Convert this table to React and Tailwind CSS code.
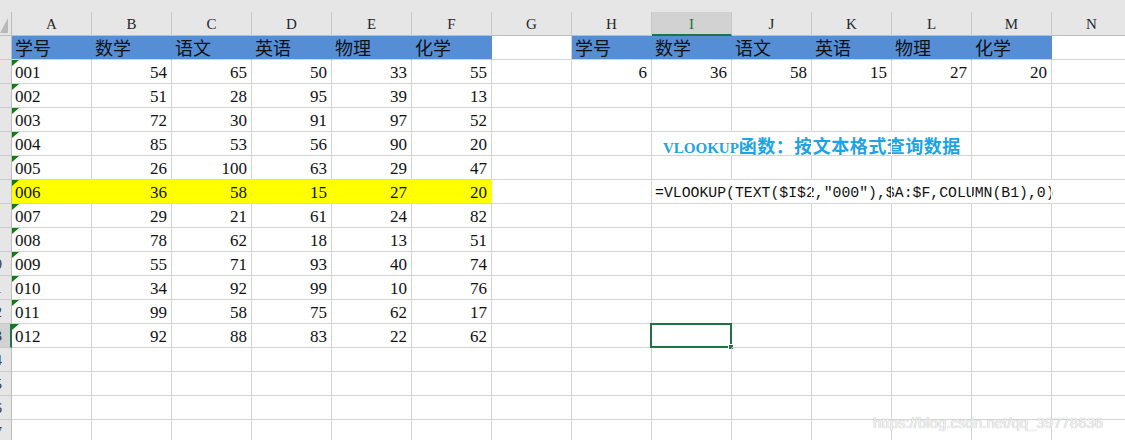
import React from "react";

const COLS = ["A", "B", "C", "D", "E", "F", "G", "H", "I", "J", "K", "L", "M", "N"];
const SUBJECTS = ["学号", "数学", "语文", "英语", "物理", "化学"];
const DATA = [
  ["001", 54, 65, 50, 33, 55],
  ["002", 51, 28, 95, 39, 13],
  ["003", 72, 30, 91, 97, 52],
  ["004", 85, 53, 56, 90, 20],
  ["005", 26, 100, 63, 29, 47],
  ["006", 36, 58, 15, 27, 20],
  ["007", 29, 21, 61, 24, 82],
  ["008", 78, 62, 18, 13, 51],
  ["009", 55, 71, 93, 40, 74],
  ["010", 34, 92, 99, 10, 76],
  ["011", 99, 58, 75, 62, 17],
  ["012", 92, 88, 83, 22, 62],
];
const LOOKUP = [6, 36, 58, 15, 27, 20];

// green "number stored as text" flag
const Flag = () => (
  <svg className="absolute top-0 left-0" width="7" height="6" viewBox="0 0 7 6">
    <polygon points="0,0 7,0 0,6" fill="#127a12" />
  </svg>
);

const Cell = ({ kind, fill, hideRight, children }) => {
  let border = "border-r-[#d4d4d4]";
  if (fill === "blue") border = "border-r-[#558ed5]";
  if (fill === "yellow") border = "border-r-[#ffff00]";
  if (hideRight) border = "border-r-white";
  let bg = "";
  if (fill === "blue") bg = "bg-[#558ed5]";
  if (fill === "yellow") bg = "bg-[#ffff00]";
  let align = "";
  if (kind === "num") align = "text-right pr-[4px] pt-[2px] leading-[22px] text-[17px]";
  if (kind === "text") align = "text-left pl-[3px] pt-[2px] leading-[22px] text-[17px]";
  if (kind === "cjk")
    align = "text-left pl-[3px] leading-[23px] text-[18px] font-[family-name:'Noto_Sans_CJK_SC',sans-serif]";
  return (
    <div
      className={`relative shrink-0 w-[80px] h-[24px] border-r border-b border-b-[#d4d4d4] whitespace-nowrap text-[#111] ${border} ${bg} ${align}`}
    >
      {children}
    </div>
  );
};

const RowHead = ({ n, selected }) => (
  <div
    className={`shrink-0 w-[12px] h-[24px] overflow-hidden border-b border-b-[#c6c6c6] ${
      selected ? "bg-[#d2d2d2] border-r-2 border-r-[#217346]" : "bg-[#e6e6e6] border-r border-r-[#bdbdbd]"
    }`}
  >
    <div className="w-[33px] ml-[-22px] text-center text-[15px] leading-[23px] pt-[1px] text-[#3a3a3a]">{n}</div>
  </div>
);

export default function App() {
  const rows = [];
  for (let r = 1; r <= 17; r++) {
    const cells = [];
    for (let c = 0; c < 14; c++) {
      const key = COLS[c] + r;
      if (r === 1 && (c < 6 || (c >= 7 && c < 13))) {
        cells.push(
          <Cell key={key} kind="cjk" fill="blue">
            {SUBJECTS[c < 6 ? c : c - 7]}
          </Cell>
        );
      } else if (r >= 2 && r <= 13 && c < 6) {
        const v = DATA[r - 2][c];
        cells.push(
          <Cell key={key} kind={c === 0 ? "text" : "num"} fill={r === 7 ? "yellow" : null}>
            {c === 0 && <Flag />}
            {v}
          </Cell>
        );
      } else if (r === 2 && c >= 7 && c < 13) {
        cells.push(
          <Cell key={key} kind="num">
            {LOOKUP[c - 7]}
          </Cell>
        );
      } else if (r === 5 && c === 8) {
        cells.push(
          <Cell key={key} hideRight>
            <div className="pl-[11px] pt-[3px] leading-[20px] font-bold text-[#1ca4e6]">
              <span className="text-[15px]">VLOOKUP</span>
              <span className="text-[18px] tracking-[0.5px] font-[family-name:'Noto_Sans_CJK_SC',sans-serif]">
                函数：按文本格式查询数据
              </span>
            </div>
          </Cell>
        );
      } else if (r === 5 && (c === 9 || c === 10)) {
        cells.push(<Cell key={key} hideRight />);
      } else if (r === 7 && c === 8) {
        cells.push(
          <Cell key={key} hideRight>
            <div className="pl-[3px] pt-[3px] leading-[20px] text-[14.8px] text-[#111] font-[family-name:'Liberation_Mono',monospace]">
              =VLOOKUP(TEXT($I$2,"000"),$A:$F,COLUMN(B1),0)
            </div>
          </Cell>
        );
      } else if (r === 7 && c > 8 && c < 13) {
        cells.push(<Cell key={key} hideRight />);
      } else if (r === 13 && c === 8) {
        cells.push(
          <Cell key={key}>
            {/* active cell I13 */}
            <div className="absolute -top-[1px] -left-[2px] -right-[1px] -bottom-[1px] border-2 border-[#217346]" />
            <div className="absolute -right-[3px] -bottom-[3px] w-[6px] h-[6px] bg-[#217346] border border-white" />
          </Cell>
        );
      } else {
        cells.push(<Cell key={key} />);
      }
    }
    rows.push(
      <div key={r} className="flex">
        <RowHead n={r} selected={r === 13} />
        {cells}
      </div>
    );
  }

  return (
    <div className="relative w-[1125px] h-[440px] overflow-hidden bg-white font-[family-name:'Liberation_Serif','Noto_Sans_CJK_SC',serif]">
      {/* top strip */}
      <div className="h-[12px] bg-[#e6e6e6]" />
      {/* column letters */}
      <div className="flex h-[24px] bg-[#e6e6e6]">
        <div className="relative shrink-0 w-[12px] h-[24px] border-r border-b border-[#bdbdbd]">
          <svg className="absolute left-0 top-[6px]" width="8" height="15" viewBox="0 0 8 15">
            <polygon points="8,0 8,15 0,15" fill="#b9b9b9" />
          </svg>
        </div>
        {COLS.map((c) => (
          <div
            key={c}
            className={`shrink-0 w-[80px] h-[24px] text-center text-[15px] pt-[2px] leading-[21px] border-r border-r-[#c8c8c8] ${
              c === "I"
                ? "bg-[#d2d2d2] text-[#217346] border-b-2 border-b-[#217346]"
                : "text-[#262626] border-b border-b-[#bdbdbd]"
            }`}
          >
            {c}
          </div>
        ))}
      </div>
      {rows}
      {/* watermark */}
      <div className="absolute left-[873px] top-[412px] text-[15px] font-[family-name:'Liberation_Sans',sans-serif] text-[#f4f4f4] [text-shadow:0_0_1px_#9a9a9a]">
        https://blog.csdn.net/qq_39778636
      </div>
    </div>
  );
}
